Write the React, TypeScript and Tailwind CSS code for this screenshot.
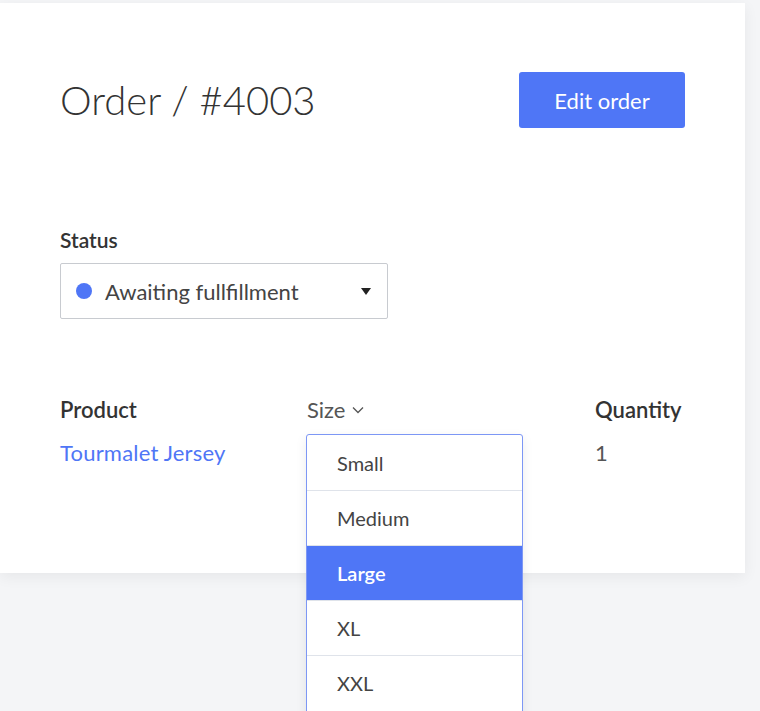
import { useState } from "react";

const sizes = ["Small", "Medium", "Large", "XL", "XXL"];

const Caret = () => (
  <svg width="10" height="7" viewBox="0 0 10 7" className="text-[#222]">
    <polygon points="0,0 10,0 5,7" fill="currentColor" />
  </svg>
);

const Chevron = () => (
  <svg width="12" height="8" viewBox="0 0 12 8" fill="none" className="text-[#555]">
    <polyline points="1,1.5 6,6.5 11,1.5" stroke="currentColor" strokeWidth="1.3" />
  </svg>
);

const App = () => {
  const [selected, setSelected] = useState("Large");

  return (
    <div className="h-[711px] overflow-hidden bg-[#f4f5f7] pt-[3px] font-['Lato',sans-serif]">
      <div className="relative h-[570px] w-[745px] bg-white px-[60px] shadow-[0_4px_14px_rgba(0,0,0,0.06)]">
        {/* header */}
        <div className="flex items-center justify-between pt-[69px]">
          <h1 className="text-[40px] font-light leading-none text-[#333]">Order / #4003</h1>
          <button className="h-[56px] w-[166px] rounded-[3px] bg-[#4f76f6] text-[22px] text-white">
            Edit order
          </button>
        </div>

        {/* status */}
        <div className="mt-[101px]">
          <div className="text-[21px] font-semibold leading-none text-[#333]">Status</div>
          <div className="mt-[13px] flex h-[56px] w-[328px] items-center rounded-[2px] border border-[#c8cbd0] pl-[15px] pr-[16px]">
            <span className="h-[16px] w-[16px] rounded-full bg-[#4f76f6]" />
            <span className="ml-[13px] flex-1 text-[22px] text-[#444]">Awaiting fullfillment</span>
            <Caret />
          </div>
        </div>

        {/* table */}
        <div className="mt-[78px] grid grid-cols-[247px_288px_1fr] text-[22px] leading-[26px]">
          <div className="font-semibold text-[#333]">Product</div>
          <div className="flex items-center gap-[7px] text-[#555]">
            Size <Chevron />
          </div>
          <div className="font-semibold text-[#333]">Quantity</div>

          <div className="mt-[17px] tracking-[0.2px] text-[#4f76f6]">Tourmalet Jersey</div>
          <div className="relative mt-[17px]">
            <ul className="absolute left-[-1px] top-[-6px] z-10 w-[217px] overflow-hidden rounded-t-[3px] border border-[#7d97f5] bg-white shadow-[0_4px_12px_rgba(0,0,0,0.08)]">
              {sizes.map((s, i) => (
                <li
                  key={s}
                  onClick={() => setSelected(s)}
                  className={`flex items-center pl-[30px] text-[20px] ${
                    i === sizes.length - 1 ? "h-[56px] pb-[2px]" : "h-[55px]"
                  } ${i > 0 ? "border-t border-[#dfe3ea]" : ""} ${
                    s === selected ? "bg-[#4f76f6] font-semibold text-white" : "text-[#444]"
                  }`}
                >
                  {s}
                </li>
              ))}
              <li className="h-[40px] border-t border-[#dfe3ea]" />
            </ul>
          </div>
          <div className="mt-[17px] text-[#555]">1</div>
        </div>
      </div>
    </div>
  );
};

export default App;
